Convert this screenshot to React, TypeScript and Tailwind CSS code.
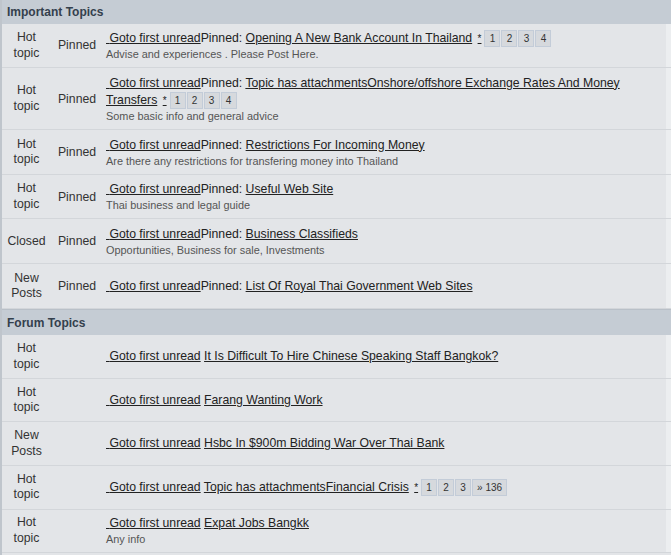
import React from 'react';

type Topic = {
  status: [string, string] | [string];
  pinned?: boolean;
  attach?: boolean;
  h: string;
  title: string;
  desc?: string;
  pages?: string[];
};

const important: Topic[] = [
  { status: ['Hot', 'topic'], pinned: true, h: 'min-h-[43px] py-[6px]', title: 'Opening A New Bank Account In Thailand', desc: 'Advise and experiences . Please Post Here.', pages: ['1', '2', '3', '4'] },
  { status: ['Hot', 'topic'], pinned: true, attach: true, h: 'min-h-[61px] py-[6px]', title: 'Onshore/offshore Exchange Rates And Money Transfers', desc: 'Some basic info and general advice', pages: ['1', '2', '3', '4'] },
  { status: ['Hot', 'topic'], pinned: true, h: 'min-h-[44px] py-[6px]', title: 'Restrictions For Incoming Money', desc: 'Are there any restrictions for transfering money into Thailand' },
  { status: ['Hot', 'topic'], pinned: true, h: 'min-h-[43px] py-[6px]', title: 'Useful Web Site', desc: 'Thai business and legal guide' },
  { status: ['Closed'], pinned: true, h: 'min-h-[44px] py-[6px]', title: 'Business Classifieds', desc: 'Opportunities, Business for sale, Investments' },
  { status: ['New', 'Posts'], pinned: true, h: 'min-h-[44px] py-[6px]', title: 'List Of Royal Thai Government Web Sites' },
];

const forum: Topic[] = [
  { status: ['Hot', 'topic'], h: 'min-h-[42.6px] py-[5px]', title: 'It Is Difficult To Hire Chinese Speaking Staff Bangkok?' },
  { status: ['Hot', 'topic'], h: 'min-h-[42.6px] py-[5px]', title: 'Farang Wanting Work' },
  { status: ['New', 'Posts'], h: 'min-h-[42.6px] py-[5px]', title: 'Hsbc In $900m Bidding War Over Thai Bank' },
  { status: ['Hot', 'topic'], attach: true, h: 'min-h-[42.6px] py-[5px]', title: 'Financial Crisis', pages: ['1', '2', '3', '» 136'] },
  { status: ['Hot', 'topic'], h: 'min-h-[42.6px] py-[5px]', title: 'Expat Jobs Bangkk', desc: 'Any info' },
];

const SectionHeader = ({ label, top }: { label: string; top?: boolean }) => (
  <div className={`flex items-center bg-[#c5ccd4] pl-[5px] ${top ? 'h-[24px]' : 'h-[26px] border-t border-[#b9c0c8]'}`}>
    <span className="text-[12px] font-bold text-[#34404d]">{label}</span>
  </div>
);

const Row = ({ t }: { t: Topic }) => (
  <div className="flex border-b border-[#d3d6da]">
    <div className={`flex flex-1 items-center bg-[#e3e5e8] ${t.h}`}>
      <div className="w-[49px] shrink-0 text-center text-[12.25px] leading-[15.5px] text-[#333]">
        {t.status.map((s) => (
          <div key={s}>{s}</div>
        ))}
      </div>
      <div className="w-[52px] shrink-0 text-center text-[12.25px] text-[#333]">{t.pinned ? 'Pinned' : ''}</div>
      <div className="min-w-0 flex-1 pl-[3px] pr-4">
        <div className="text-[12.25px] leading-[17px] text-[#222]">
          <span className="underline">{'\u00a0'}Goto first unread</span>
          {t.pinned ? 'Pinned: ' : ' '}
          {t.attach && <span className="underline">Topic has attachments</span>}
          <span className="underline">{t.title}</span>
          {t.pages && (
            <>
              {' '}
              <span className="ml-[2px] text-[10px] underline">*</span>
              <span className="ml-[3px] inline-flex gap-[1px] align-middle">
                {t.pages.map((p) => (
                  <span
                    key={p}
                    className={`inline-flex h-[17px] items-center justify-center border border-[#c3ccd8] bg-[#d6d9dd] text-[10px] text-[#333] ${p.length > 1 ? 'px-[4px]' : 'w-[16px]'}`}
                  >
                    {p}
                  </span>
                ))}
              </span>
            </>
          )}
        </div>
        {t.desc && <div className="text-[10.9px] leading-[14px] text-[#555]">{t.desc}</div>}
      </div>
    </div>
    <div className="w-[5px] shrink-0 bg-[#eceef0]" />
  </div>
);

export default function App() {
  return (
    <div className="h-[555px] w-[671px] overflow-hidden border-l-2 border-[#bfc5cc] bg-[#e3e5e8] font-['Liberation_Sans',Arial,sans-serif]">
      <SectionHeader label="Important Topics" top />
      {important.map((t) => (
        <Row key={t.title} t={t} />
      ))}
      <SectionHeader label="Forum Topics" />
      {forum.map((t) => (
        <Row key={t.title} t={t} />
      ))}
    </div>
  );
}
